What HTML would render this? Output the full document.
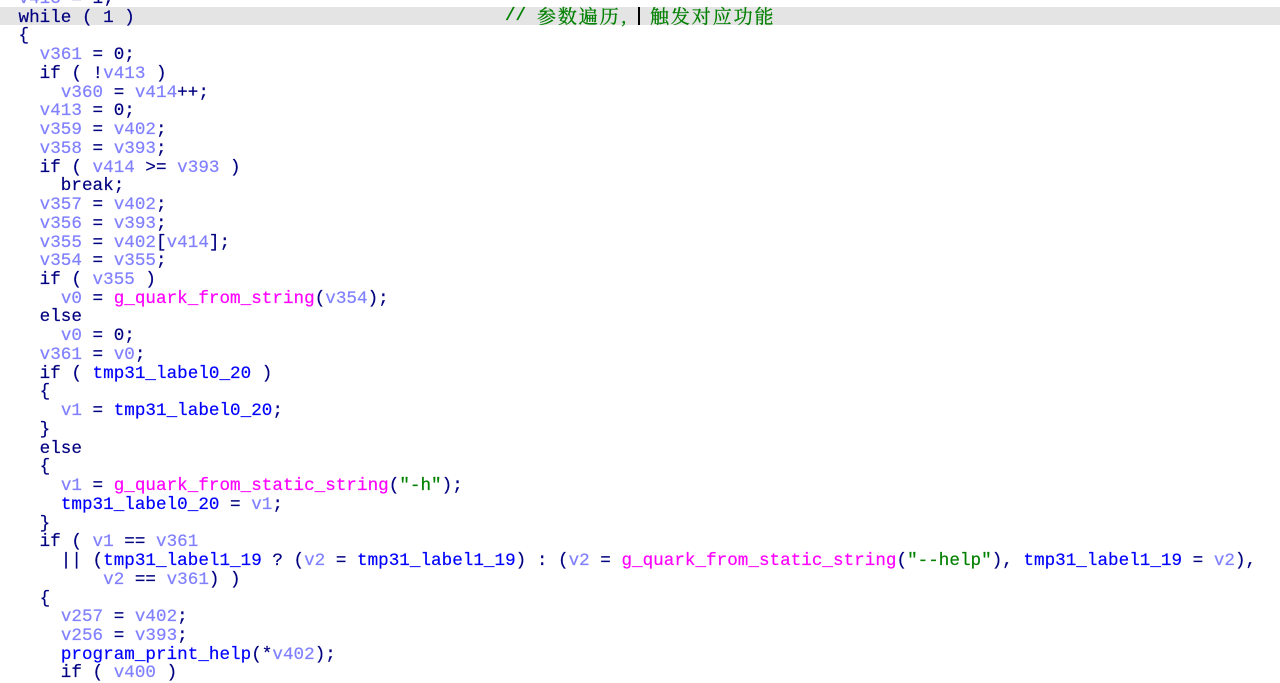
<!DOCTYPE html>
<html><head><meta charset="utf-8"><style>
html,body{margin:0;padding:0;background:#fff;width:1280px;height:679px;overflow:hidden}
#hl{position:absolute;left:0;top:7px;width:1280px;height:18px;background:#e4e4e4}
#cur{position:absolute;left:638px;top:7px;width:2px;height:18px;background:#000}
pre{position:absolute;left:18.5px;top:-10px;margin:0;font:17.6px/18.74px "Liberation Mono",monospace;letter-spacing:.02px;color:#000080;filter:blur(.3px);-webkit-text-stroke:.2px}
pre i{font-style:normal;color:#8080ff}
pre b{font-weight:normal;color:#ff00ff}
pre u{text-decoration:none;color:#0000ff}
pre s{text-decoration:none;color:#008000}
.c{position:absolute;top:7px;font:19px/18px "Noto Serif CJK SC","Liberation Mono",serif;color:#008000;white-space:pre;filter:blur(.3px);-webkit-text-stroke:.3px}
</style></head><body>
<div id="hl"></div>
<pre><i>v413</i> = 1;
while ( 1 )
{
  <i>v361</i> = 0;
  if ( !<i>v413</i> )
    <i>v360</i> = <i>v414</i>++;
  <i>v413</i> = 0;
  <i>v359</i> = <i>v402</i>;
  <i>v358</i> = <i>v393</i>;
  if ( <i>v414</i> &gt;= <i>v393</i> )
    break;
  <i>v357</i> = <i>v402</i>;
  <i>v356</i> = <i>v393</i>;
  <i>v355</i> = <i>v402</i>[<i>v414</i>];
  <i>v354</i> = <i>v355</i>;
  if ( <i>v355</i> )
    <i>v0</i> = <b>g_quark_from_string</b>(<i>v354</i>);
  else
    <i>v0</i> = 0;
  <i>v361</i> = <i>v0</i>;
  if ( <u>tmp31_label0_20</u> )
  {
    <i>v1</i> = <u>tmp31_label0_20</u>;
  }
  else
  {
    <i>v1</i> = <b>g_quark_from_static_string</b>(<s>"-h"</s>);
    <u>tmp31_label0_20</u> = <i>v1</i>;
  }
  if ( <i>v1</i> == <i>v361</i>
    || (<u>tmp31_label1_19</u> ? (<i>v2</i> = <u>tmp31_label1_19</u>) : (<i>v2</i> = <b>g_quark_from_static_string</b>(<s>"--help"</s>), <u>tmp31_label1_19</u> = <i>v2</i>),
        <i>v2</i> == <i>v361</i>) )
  {
    <i>v257</i> = <i>v402</i>;
    <i>v256</i> = <i>v393</i>;
    <u>program_print_help</u>(*<i>v402</i>);
    if ( <i>v400</i> )</pre>
<div class="c" style="left:505px;font-family:'Liberation Mono',monospace;font-size:17.6px">//</div>
<div class="c" style="left:537px;letter-spacing:1.9px">参数遍历,</div>
<div id="cur"></div>
<div class="c" style="left:650px;letter-spacing:1.9px">触发对应功能</div>
</body></html>
